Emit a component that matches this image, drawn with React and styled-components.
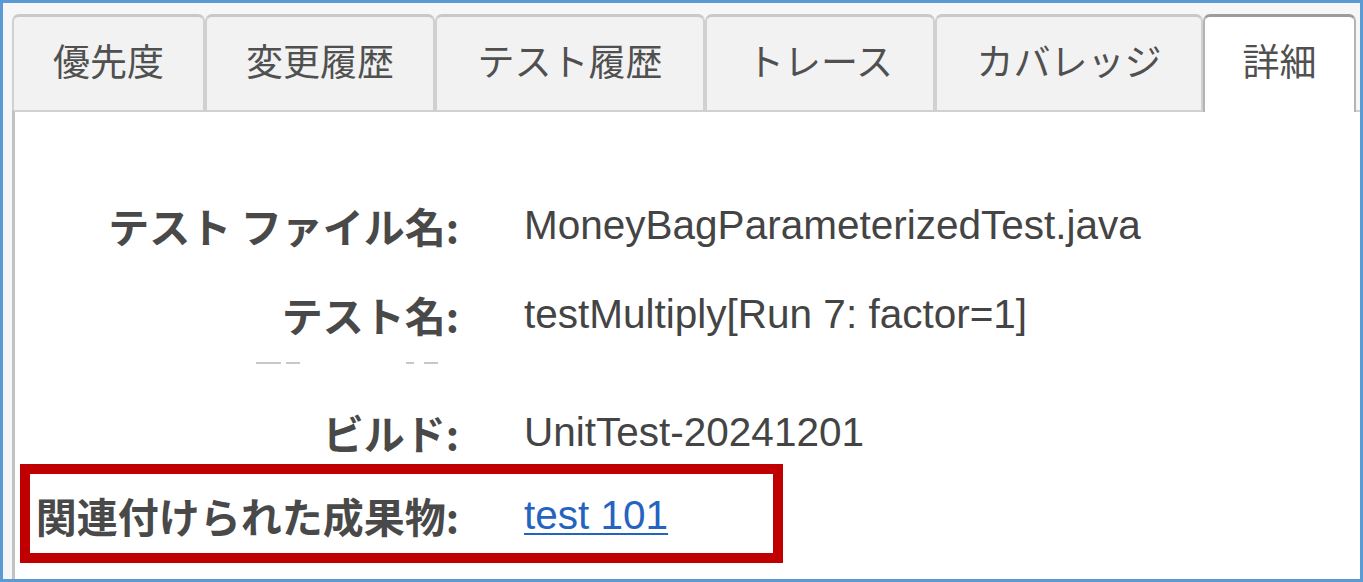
import React from "react";
import styled, { createGlobalStyle } from "styled-components";

const GlobalStyle = createGlobalStyle`
  html, body {
    margin: 0;
    padding: 0;
    background: #ffffff;
  }
  * {
    box-sizing: border-box;
  }
`;

const Frame = styled.div`
  width: 1363px;
  height: 582px;
  border: 3px solid #5b9bd5;
  background: #f6f6f6;
  display: flex;
  flex-direction: column;
  padding: 11px 0 0 9px;
  overflow: hidden;
  font-family: "Noto Sans CJK JP", "Noto Sans", sans-serif;
`;

const TabBar = styled.div`
  display: flex;
  align-items: flex-end;
  position: relative;
  z-index: 1;
`;

const Tab = styled.div`
  width: ${({ $w }) => $w}px;
  height: ${({ $active }) => ($active ? 98 : 96)}px;
  margin-bottom: ${({ $active }) => ($active ? -2 : 0)}px;
  display: flex;
  align-items: center;
  justify-content: center;
  padding-bottom: ${({ $active }) => ($active ? 10 : 8)}px;
  background: ${({ $active }) => ($active ? "#ffffff" : "#f2f2f2")};
  border: 2px solid ${({ $active }) => ($active ? "#b4b4b4" : "#d0d0d0")};
  border-top: 3px solid ${({ $active }) => ($active ? "#9c9c9c" : "#c9c9c9")};
  border-bottom: none;
  border-radius: 7px 7px 0 0;
  font-size: 37px;
  color: #505050;
  white-space: nowrap;
`;

const Panel = styled.div`
  flex: 1;
  background: #ffffff;
  border-left: 3px solid #c2c2c2;
  border-top: 2px solid #d0d0d0;
  display: flex;
  flex-direction: column;
  padding-top: 83px;
`;

const Row = styled.div`
  display: grid;
  grid-template-columns: ${({ $framed }) => ($framed ? 429 : 444)}px auto;
  column-gap: 65px;
  align-items: center;
  height: ${({ $framed }) => ($framed ? 99 : 60)}px;
  margin-top: ${({ $top }) => $top || 0}px;
  ${({ $framed }) =>
    $framed &&
    `
    width: 763px;
    margin-left: 5px;
    border: 10px solid #c00000;
    padding-top: 3px;
  `}
`;

const Label = styled.div`
  text-align: right;
  font-family: "Noto Sans CJK JP", sans-serif;
  font-weight: 700;
  font-size: 41px;
  color: #494949;
  white-space: nowrap;
  line-height: 1;
`;

const Value = styled.div`
  font-family: "Liberation Sans", Arial, sans-serif;
  font-size: 40.5px;
  color: #444444;
  white-space: nowrap;
  line-height: 1;
`;

const Link = styled.a`
  font-family: "Liberation Sans", Arial, sans-serif;
  font-size: 40.5px;
  color: #2563c0;
  text-decoration: underline;
  text-underline-offset: 4px;
  text-decoration-thickness: 2px;
  line-height: 1;
`;

const Ghost = styled.div`
  display: flex;
  height: 3px;
  margin-top: 18px;
  padding-left: 241px;
`;

const Dash = styled.span`
  width: ${({ $w }) => $w}px;
  margin-right: ${({ $gap }) => $gap || 0}px;
  height: 2px;
  background: #c8c8c8;
`;

const tabs = [
  { label: "優先度", w: 193 },
  { label: "変更履歴", w: 230 },
  { label: "テスト履歴", w: 270 },
  { label: "トレース", w: 230 },
  { label: "カバレッジ", w: 268 },
  { label: "詳細", w: 153, active: true },
];

const ghostDashes = [
  { w: 25, gap: 5 },
  { w: 14, gap: 106 },
  { w: 8, gap: 10 },
  { w: 14 },
];

export default function App() {
  return (
    <>
      <GlobalStyle />
      <Frame>
        <TabBar>
          {tabs.map((t) => (
            <Tab key={t.label} $w={t.w} $active={t.active}>
              {t.label}
            </Tab>
          ))}
        </TabBar>
        <Panel>
          <Row>
            <Label>テスト ファイル名:</Label>
            <Value>MoneyBagParameterizedTest.java</Value>
          </Row>
          <Row $top={29}>
            <Label>テスト名:</Label>
            <Value>testMultiply[Run 7: factor=1]</Value>
          </Row>
          <Ghost>
            {ghostDashes.map((d, i) => (
              <Dash key={i} $w={d.w} $gap={d.gap} />
            ))}
          </Ghost>
          <Row $top={37}>
            <Label>ビルド:</Label>
            <Value>UnitTest-20241201</Value>
          </Row>
          <Row $framed $top={2}>
            <Label>関連付けられた成果物:</Label>
            <Value>
              <Link href="#">test 101</Link>
            </Value>
          </Row>
        </Panel>
      </Frame>
    </>
  );
}
